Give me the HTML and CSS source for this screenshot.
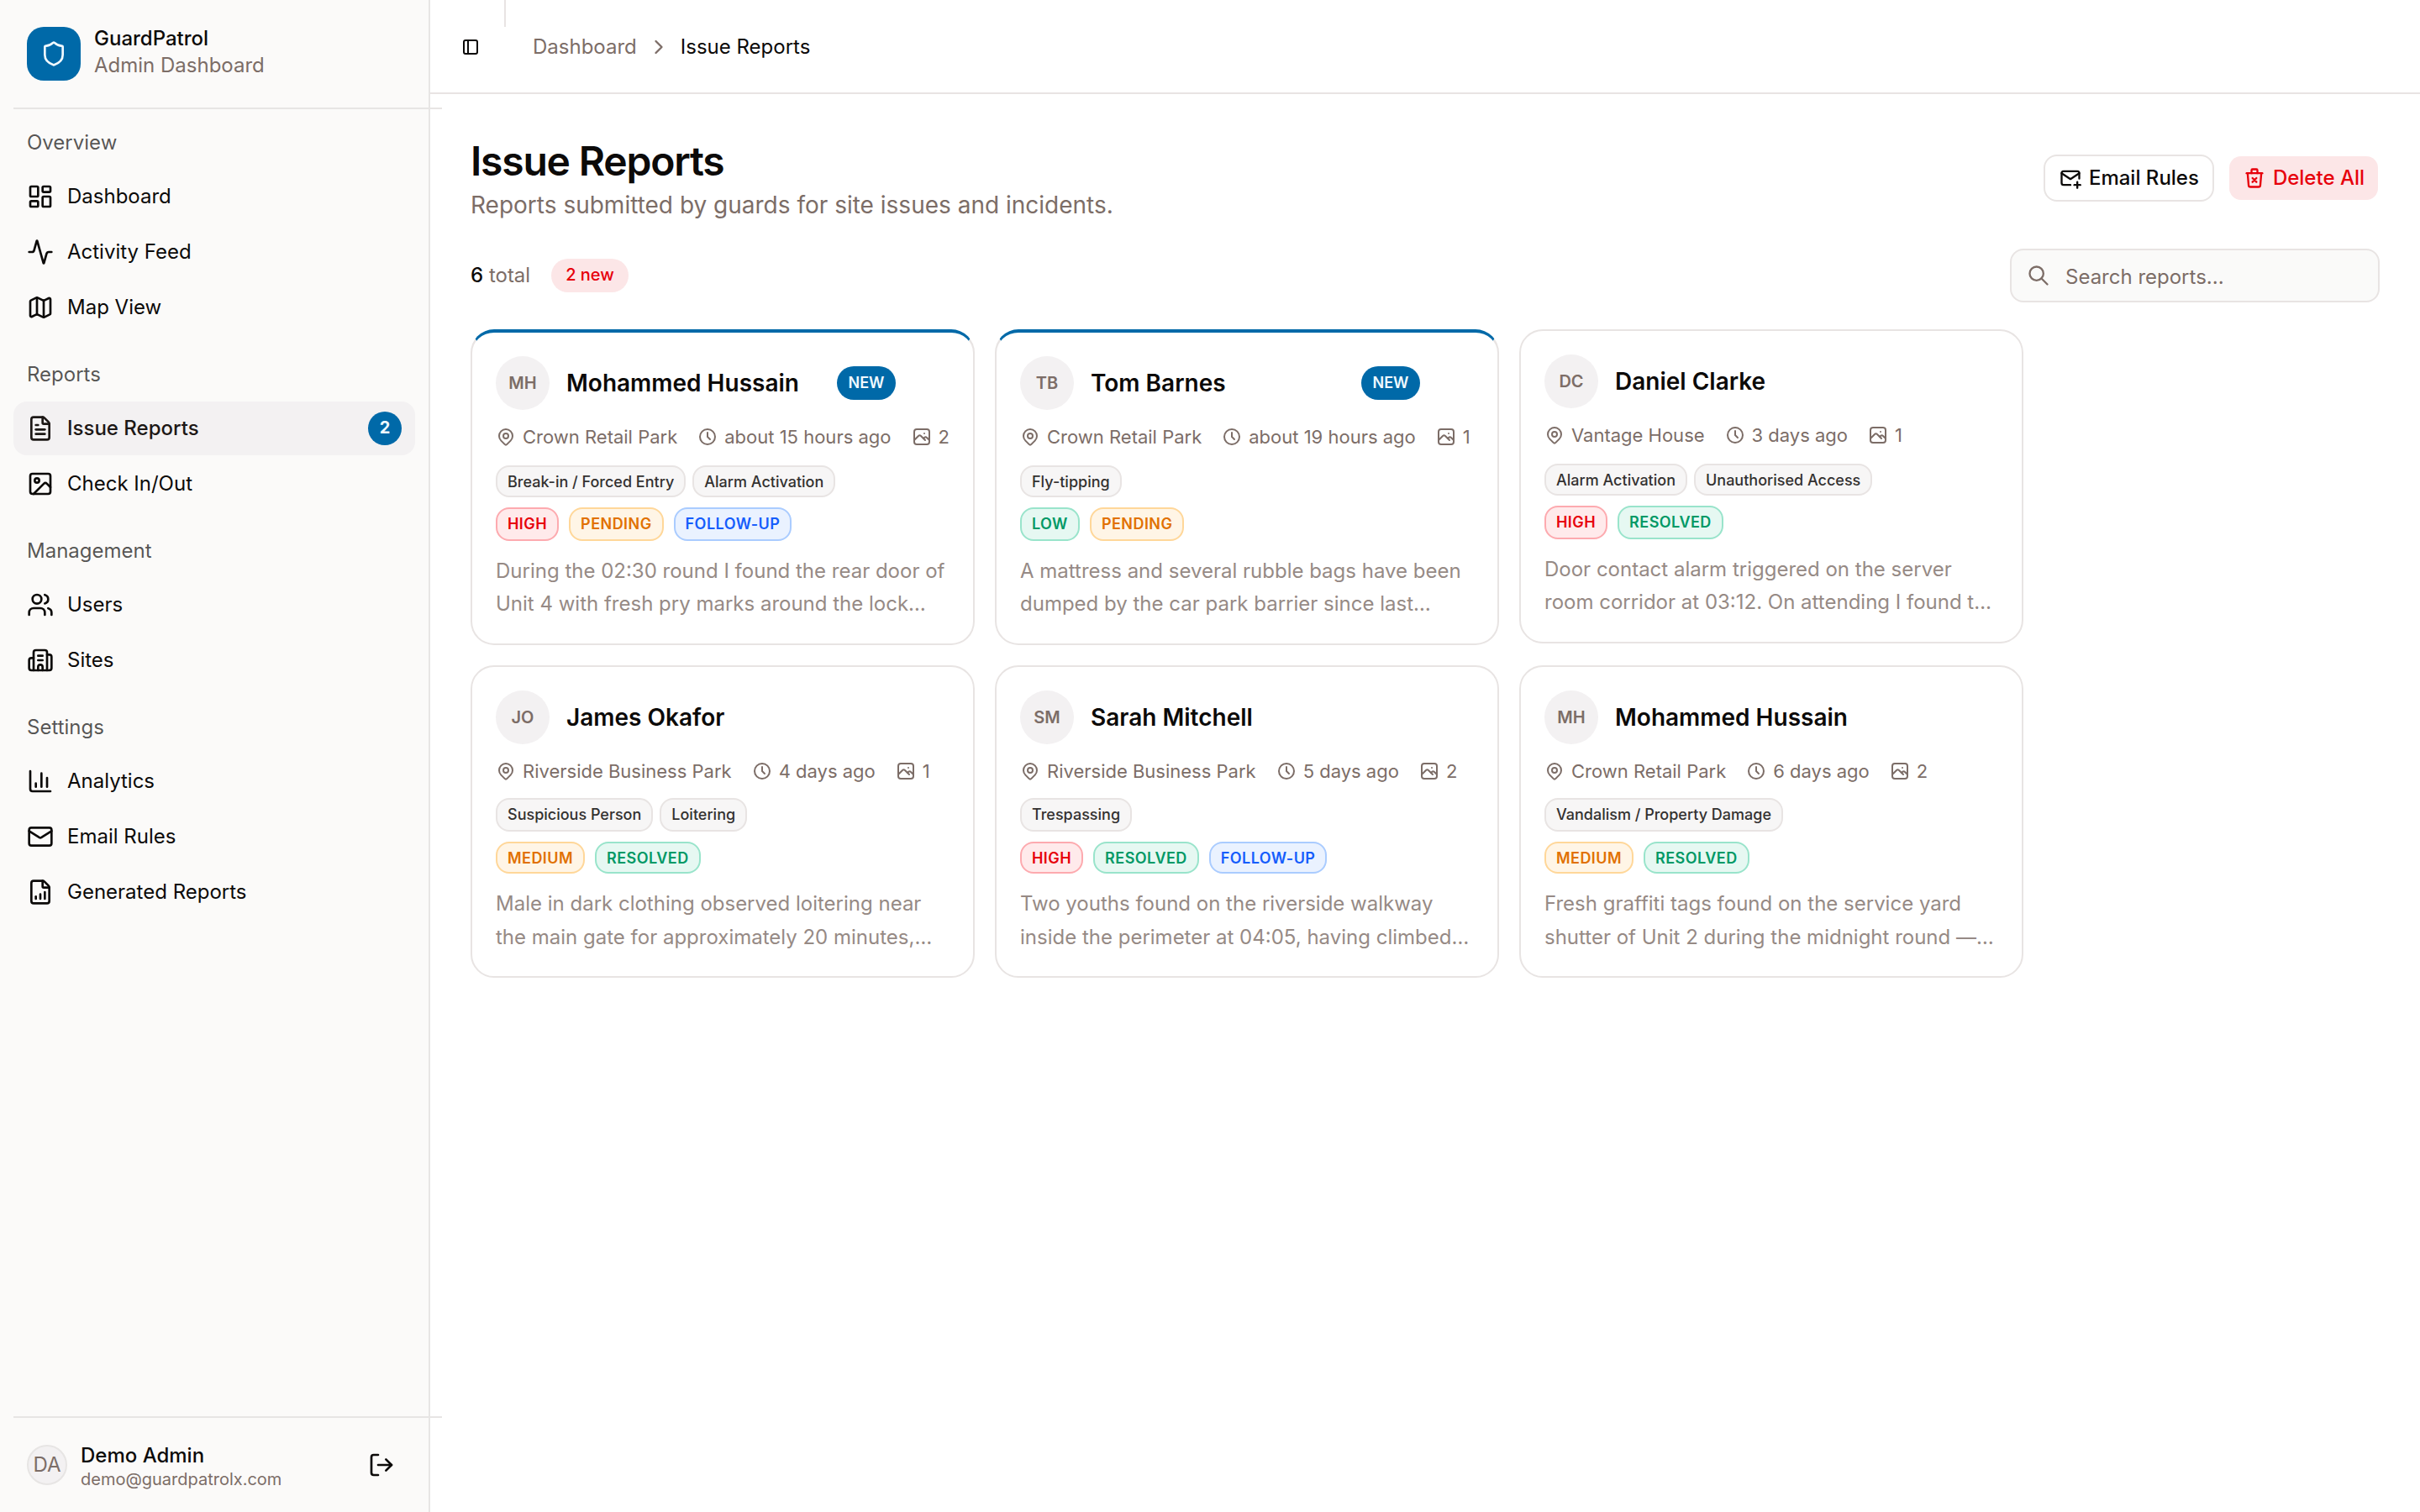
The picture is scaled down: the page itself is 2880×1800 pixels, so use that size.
FILE: index.html
```html
<!DOCTYPE html>
<html lang="en">
<head>
    <meta charset="UTF-8">
    <meta name="viewport" content="width=device-width, initial-scale=1.0">
    <title>GuardPatrol - Issue Reports</title>
    <link rel="stylesheet" href="styles.css">
</head>
<body>

<!-- Icon definitions -->
<svg class="icon-defs" xmlns="http://www.w3.org/2000/svg">
    <symbol id="shield" viewBox="0 0 24 24"><path d="M20 13c0 5-3.5 7.5-7.66 8.95a1 1 0 0 1-.67-.01C7.5 20.5 4 18 4 13V6a1 1 0 0 1 1-1c2 0 4.5-1.2 6.24-2.72a1.17 1.17 0 0 1 1.52 0C14.51 3.81 17 5 19 5a1 1 0 0 1 1 1z"/></symbol>
    <symbol id="dashboard" viewBox="0 0 24 24"><rect width="7" height="9" x="3" y="3" rx="1"/><rect width="7" height="5" x="14" y="3" rx="1"/><rect width="7" height="9" x="14" y="12" rx="1"/><rect width="7" height="5" x="3" y="16" rx="1"/></symbol>
    <symbol id="activity" viewBox="0 0 24 24"><path d="M22 12h-2.48a2 2 0 0 0-1.93 1.46l-2.35 8.36a.25.25 0 0 1-.48 0L9.24 2.18a.25.25 0 0 0-.48 0l-2.35 8.36A2 2 0 0 1 4.49 12H2"/></symbol>
    <symbol id="map" viewBox="0 0 24 24"><path d="M14.106 5.553a2 2 0 0 0 1.788 0l3.659-1.83A1 1 0 0 1 21 4.619v12.764a1 1 0 0 1-.553.894l-4.553 2.277a2 2 0 0 1-1.788 0l-4.212-2.106a2 2 0 0 0-1.788 0l-3.659 1.83A1 1 0 0 1 3 19.381V6.618a1 1 0 0 1 .553-.894l4.553-2.277a2 2 0 0 1 1.788 0z"/><path d="M15 5.764v15"/><path d="M9 3.236v15"/></symbol>
    <symbol id="file-text" viewBox="0 0 24 24"><path d="M6 22a2 2 0 0 1-2-2V4a2 2 0 0 1 2-2h8a2.4 2.4 0 0 1 1.704.706l3.588 3.588A2.4 2.4 0 0 1 20 8v12a2 2 0 0 1-2 2z"/><path d="M14 2v5a1 1 0 0 0 1 1h5"/><path d="M10 9H8"/><path d="M16 13H8"/><path d="M16 17H8"/></symbol>
    <symbol id="image" viewBox="0 0 24 24"><rect width="18" height="18" x="3" y="3" rx="2"/><circle cx="9" cy="9" r="2"/><path d="m21 15-3.086-3.086a2 2 0 0 0-2.828 0L6 21"/></symbol>
    <symbol id="users" viewBox="0 0 24 24"><path d="M16 21v-2a4 4 0 0 0-4-4H6a4 4 0 0 0-4 4v2"/><path d="M16 3.128a4 4 0 0 1 0 7.744"/><path d="M22 21v-2a4 4 0 0 0-3-3.87"/><circle cx="9" cy="7" r="4"/></symbol>
    <symbol id="building" viewBox="0 0 24 24"><path d="M10 12h4"/><path d="M10 8h4"/><path d="M14 21v-3a2 2 0 0 0-4 0v3"/><path d="M6 10H4a2 2 0 0 0-2 2v7a2 2 0 0 0 2 2h16a2 2 0 0 0 2-2V9a2 2 0 0 0-2-2h-2"/><path d="M6 21V5a2 2 0 0 1 2-2h8a2 2 0 0 1 2 2v16"/></symbol>
    <symbol id="chart" viewBox="0 0 24 24"><path d="M3 3v16a2 2 0 0 0 2 2h16"/><path d="M18 17V9"/><path d="M13 17V5"/><path d="M8 17v-3"/></symbol>
    <symbol id="mail" viewBox="0 0 24 24"><path d="m22 7-8.991 5.727a2 2 0 0 1-2.009 0L2 7"/><rect x="2" y="4" width="20" height="16" rx="2"/></symbol>
    <symbol id="file-chart" viewBox="0 0 24 24"><path d="M6 22a2 2 0 0 1-2-2V4a2 2 0 0 1 2-2h8a2.4 2.4 0 0 1 1.704.706l3.588 3.588A2.4 2.4 0 0 1 20 8v12a2 2 0 0 1-2 2z"/><path d="M14 2v5a1 1 0 0 0 1 1h5"/><path d="M8 18v-2"/><path d="M12 18v-4"/><path d="M16 18v-6"/></symbol>
    <symbol id="log-out" viewBox="0 0 24 24"><path d="m16 17 5-5-5-5"/><path d="M21 12H9"/><path d="M9 21H5a2 2 0 0 1-2-2V5a2 2 0 0 1 2-2h4"/></symbol>
    <symbol id="sidebar-toggle" viewBox="0 0 24 24"><path d="M4 6a2 2 0 0 1 2-2h12a2 2 0 0 1 2 2v12a2 2 0 0 1-2 2H6a2 2 0 0 1-2-2z"/><path d="M9 4v16"/></symbol>
    <symbol id="chevron" viewBox="0 0 24 24"><path d="M9 6l6 6l-6 6"/></symbol>
    <symbol id="mail-plus" viewBox="0 0 24 24"><path d="M12 19H5a2 2 0 0 1-2-2V7a2 2 0 0 1 2-2h14a2 2 0 0 1 2 2v5.5"/><path d="M16 19h6"/><path d="M19 16v6"/><path d="M3 7l9 6l9-6"/></symbol>
    <symbol id="trash-x" viewBox="0 0 24 24"><path d="M4 7h16"/><path d="M5 7l1 12a2 2 0 0 0 2 2h8a2 2 0 0 0 2-2l1-12"/><path d="M9 7V4a1 1 0 0 1 1-1h4a1 1 0 0 1 1 1v3"/><path d="M10 12l4 4m0-4l-4 4"/></symbol>
    <symbol id="search" viewBox="0 0 24 24"><circle cx="10" cy="10" r="7"/><path d="M21 21l-6-6"/></symbol>
    <symbol id="pin" viewBox="0 0 24 24"><circle cx="12" cy="11" r="3"/><path d="M17.657 16.657L13.414 20.9a2 2 0 0 1-2.827 0l-4.244-4.243a8 8 0 1 1 11.314 0z"/></symbol>
    <symbol id="clock" viewBox="0 0 24 24"><circle cx="12" cy="12" r="9"/><path d="M12 7v5l3 3"/></symbol>
    <symbol id="photo" viewBox="0 0 24 24"><path d="M15 8h.01"/><path d="M3 6a3 3 0 0 1 3-3h12a3 3 0 0 1 3 3v12a3 3 0 0 1-3 3H6a3 3 0 0 1-3-3z"/><path d="M3 16l5-5c.928-.893 2.072-.893 3 0l5 5"/><path d="M14 14l1-1c.928-.893 2.072-.893 3 0l3 3"/></symbol>
</svg>

<div class="app">
    <aside class="sidebar">
        <div class="brand">
            <div class="brand-logo"><svg class="icon"><use href="#shield"/></svg></div>
            <div class="brand-text">
                <span class="brand-name">GuardPatrol</span>
                <span class="brand-sub">Admin Dashboard</span>
            </div>
        </div>
        <div class="divider"></div>

        <nav class="nav">
            <div class="nav-group">
                <div class="nav-label">Overview</div>
                <a class="nav-item"><svg class="icon"><use href="#dashboard"/></svg><span>Dashboard</span></a>
                <a class="nav-item"><svg class="icon"><use href="#activity"/></svg><span>Activity Feed</span></a>
                <a class="nav-item"><svg class="icon"><use href="#map"/></svg><span>Map View</span></a>
            </div>
            <div class="nav-group">
                <div class="nav-label">Reports</div>
                <a class="nav-item active"><svg class="icon"><use href="#file-text"/></svg><span>Issue Reports</span><span class="nav-badge">2</span></a>
                <a class="nav-item"><svg class="icon"><use href="#image"/></svg><span>Check In/Out</span></a>
            </div>
            <div class="nav-group">
                <div class="nav-label">Management</div>
                <a class="nav-item"><svg class="icon"><use href="#users"/></svg><span>Users</span></a>
                <a class="nav-item"><svg class="icon"><use href="#building"/></svg><span>Sites</span></a>
            </div>
            <div class="nav-group">
                <div class="nav-label">Settings</div>
                <a class="nav-item"><svg class="icon"><use href="#chart"/></svg><span>Analytics</span></a>
                <a class="nav-item"><svg class="icon"><use href="#mail"/></svg><span>Email Rules</span></a>
                <a class="nav-item"><svg class="icon"><use href="#file-chart"/></svg><span>Generated Reports</span></a>
            </div>
        </nav>

        <div class="divider"></div>
        <div class="account">
            <div class="account-avatar">DA</div>
            <div class="account-text">
                <span class="account-name">Demo Admin</span>
                <span class="account-email">demo@guardpatrolx.com</span>
            </div>
            <svg class="icon"><use href="#log-out"/></svg>
        </div>
    </aside>

    <main class="main">
        <header class="topbar">
            <svg class="icon toggle"><use href="#sidebar-toggle"/></svg>
            <div class="topbar-separator"></div>
            <div class="breadcrumb">
                <span class="crumb">Dashboard</span>
                <svg class="icon"><use href="#chevron"/></svg>
                <span class="crumb current">Issue Reports</span>
            </div>
        </header>

        <section class="content">
            <div class="page-head">
                <div class="page-title">
                    <h1>Issue Reports</h1>
                    <p class="subtitle">Reports submitted by guards for site issues and incidents.</p>
                </div>
                <div class="actions">
                    <button class="btn btn-outline"><svg class="icon"><use href="#mail-plus"/></svg>Email Rules</button>
                    <button class="btn btn-danger"><svg class="icon"><use href="#trash-x"/></svg>Delete All</button>
                </div>
            </div>

            <div class="filters">
                <div class="total"><b>6</b> total</div>
                <span class="new-count">2 new</span>
                <div class="search"><svg class="icon"><use href="#search"/></svg><input type="text" placeholder="Search reports..."></div>
            </div>

            <div class="cards">
                <article class="card unread">
                    <div class="card-head">
                        <div class="avatar">MH</div>
                        <h2>Mohammed Hussain</h2>
                        <span class="new-badge">NEW</span>
                    </div>
                    <div class="meta">
                        <span><svg class="icon"><use href="#pin"/></svg>Crown Retail Park</span>
                        <span><svg class="icon"><use href="#clock"/></svg>about 15 hours ago</span>
                        <span><svg class="icon"><use href="#photo"/></svg>2</span>
                    </div>
                    <div class="tags"><span class="tag">Break-in / Forced Entry</span><span class="tag">Alarm Activation</span></div>
                    <div class="pills"><span class="pill red">HIGH</span><span class="pill amber">PENDING</span><span class="pill blue">FOLLOW-UP</span></div>
                    <p class="desc">During the 02:30 round I found the rear door of Unit 4 with fresh pry marks around the lock…</p>
                </article>

                <article class="card unread">
                    <div class="card-head">
                        <div class="avatar">TB</div>
                        <h2>Tom Barnes</h2>
                        <span class="new-badge">NEW</span>
                    </div>
                    <div class="meta">
                        <span><svg class="icon"><use href="#pin"/></svg>Crown Retail Park</span>
                        <span><svg class="icon"><use href="#clock"/></svg>about 19 hours ago</span>
                        <span><svg class="icon"><use href="#photo"/></svg>1</span>
                    </div>
                    <div class="tags"><span class="tag">Fly-tipping</span></div>
                    <div class="pills"><span class="pill green">LOW</span><span class="pill amber">PENDING</span></div>
                    <p class="desc">A mattress and several rubble bags have been dumped by the car park barrier since last…</p>
                </article>

                <article class="card">
                    <div class="card-head">
                        <div class="avatar">DC</div>
                        <h2>Daniel Clarke</h2>
                    </div>
                    <div class="meta">
                        <span><svg class="icon"><use href="#pin"/></svg>Vantage House</span>
                        <span><svg class="icon"><use href="#clock"/></svg>3 days ago</span>
                        <span><svg class="icon"><use href="#photo"/></svg>1</span>
                    </div>
                    <div class="tags"><span class="tag">Alarm Activation</span><span class="tag">Unauthorised Access</span></div>
                    <div class="pills"><span class="pill red">HIGH</span><span class="pill green">RESOLVED</span></div>
                    <p class="desc">Door contact alarm triggered on the server room corridor at 03:12. On attending I found t…</p>
                </article>

                <article class="card">
                    <div class="card-head">
                        <div class="avatar">JO</div>
                        <h2>James Okafor</h2>
                    </div>
                    <div class="meta">
                        <span><svg class="icon"><use href="#pin"/></svg>Riverside Business Park</span>
                        <span><svg class="icon"><use href="#clock"/></svg>4 days ago</span>
                        <span><svg class="icon"><use href="#photo"/></svg>1</span>
                    </div>
                    <div class="tags"><span class="tag">Suspicious Person</span><span class="tag">Loitering</span></div>
                    <div class="pills"><span class="pill amber">MEDIUM</span><span class="pill green">RESOLVED</span></div>
                    <p class="desc">Male in dark clothing observed loitering near the main gate for approximately 20 minutes,…</p>
                </article>

                <article class="card">
                    <div class="card-head">
                        <div class="avatar">SM</div>
                        <h2>Sarah Mitchell</h2>
                    </div>
                    <div class="meta">
                        <span><svg class="icon"><use href="#pin"/></svg>Riverside Business Park</span>
                        <span><svg class="icon"><use href="#clock"/></svg>5 days ago</span>
                        <span><svg class="icon"><use href="#photo"/></svg>2</span>
                    </div>
                    <div class="tags"><span class="tag">Trespassing</span></div>
                    <div class="pills"><span class="pill red">HIGH</span><span class="pill green">RESOLVED</span><span class="pill blue">FOLLOW-UP</span></div>
                    <p class="desc">Two youths found on the riverside walkway inside the perimeter at 04:05, having climbed…</p>
                </article>

                <article class="card">
                    <div class="card-head">
                        <div class="avatar">MH</div>
                        <h2>Mohammed Hussain</h2>
                    </div>
                    <div class="meta">
                        <span><svg class="icon"><use href="#pin"/></svg>Crown Retail Park</span>
                        <span><svg class="icon"><use href="#clock"/></svg>6 days ago</span>
                        <span><svg class="icon"><use href="#photo"/></svg>2</span>
                    </div>
                    <div class="tags"><span class="tag">Vandalism / Property Damage</span></div>
                    <div class="pills"><span class="pill amber">MEDIUM</span><span class="pill green">RESOLVED</span></div>
                    <p class="desc">Fresh graffiti tags found on the service yard shutter of Unit 2 during the midnight round —…</p>
                </article>
            </div>
        </section>
    </main>
</div>

</body>
</html>
```
FILE: styles.css
```css
:root {
    --foreground: #0c0a09;
    --muted: #7c6d67;
    --muted-bg: #f3f1f2;
    --border: #e8e4e3;
    --sidebar: #fbfaf9;
    --primary: #0069a8;
    --primary-text: #f0f9ff;
    --danger: #e7000b;
}
* {
    box-sizing: border-box;
}
body {
    margin: 0;
    font-family: Inter, sans-serif;
    font-size: 24px;
    line-height: 32px;
    color: var(--foreground);
    background-color: white;
}
h1, h2, p {
    margin: 0;
}
.icon-defs {
    display: none;
}
.icon {
    width: 32px;
    height: 32px;
    flex-shrink: 0;
    fill: none;
    stroke: currentColor;
    stroke-width: 2;
    stroke-linecap: round;
    stroke-linejoin: round;
}
.app {
    display: flex;
    height: 1800px;
}

/* Sidebar */
.sidebar {
    width: 512px;
    flex-shrink: 0;
    display: flex;
    flex-direction: column;
    background-color: var(--sidebar);
    border-right: 2px solid #e7e5e4;
}
.brand {
    height: 128px;
    display: flex;
    align-items: center;
    gap: 16px;
    padding: 0 32px;
}
.brand-logo {
    width: 64px;
    height: 64px;
    display: flex;
    align-items: center;
    justify-content: center;
    border-radius: 20px;
    background-color: var(--primary);
    color: var(--primary-text);
}
.brand-text {
    display: flex;
    flex-direction: column;
    margin-top: -4px;
}
.brand-name {
    font-weight: 500;
}
.brand-sub {
    color: var(--muted);
}
/* Lines run past the right edge of the sidebar */
.divider {
    width: 510px;
    height: 2px;
    flex-shrink: 0;
    margin-left: 16px;
    background-color: #e7e5e4;
}
.nav {
    flex: 1;
}
.nav-group {
    display: flex;
    flex-direction: column;
    gap: 2px;
    padding: 8px 16px;
}
.nav-label {
    height: 64px;
    padding: 16px;
    margin-bottom: -2px;
    color: rgba(12, 10, 9, 0.7);
}
.nav-item {
    height: 64px;
    display: flex;
    align-items: center;
    gap: 16px;
    padding: 0 16px;
    border-radius: 16px;
}
.nav-item.active {
    background-color: var(--muted-bg);
    color: #1d1816;
    font-weight: 500;
}
.nav-badge {
    width: 40px;
    height: 40px;
    line-height: 39px;
    margin-left: auto;
    border-radius: 50%;
    background-color: var(--primary);
    color: var(--primary-text);
    font-size: 20px;
    font-weight: 700;
    text-align: center;
}
.account {
    height: 112px;
    display: flex;
    align-items: center;
    gap: 16px;
    padding: 0 40px 0 32px;
}
.account-avatar {
    width: 48px;
    height: 48px;
    display: flex;
    align-items: center;
    justify-content: center;
    border: 2px solid #e7e5e4;
    border-radius: 50%;
    background-color: var(--muted-bg);
    color: var(--muted);
}
.account-text {
    flex: 1;
    display: flex;
    flex-direction: column;
    padding-top: 3px;
}
.account-name {
    line-height: 30px;
    font-weight: 500;
}
.account-email {
    font-size: 20px;
    line-height: 26px;
    color: var(--muted);
}

/* Top bar */
.main {
    flex: 1;
}
.topbar {
    height: 112px;
    display: flex;
    align-items: center;
    padding: 2px 0 0 36px;
    border-bottom: 2px solid var(--border);
}
.topbar .toggle {
    width: 24px;
    height: 24px;
}
.topbar-separator {
    width: 2px;
    height: 32px;
    align-self: flex-start;
    margin: -2px 32px 0 28px;
    background-color: var(--border);
}
.breadcrumb {
    display: flex;
    align-items: center;
    gap: 12px;
}
.breadcrumb .icon {
    width: 28px;
    height: 28px;
    color: var(--muted);
}
.crumb {
    color: var(--muted);
}
.crumb.current {
    color: var(--foreground);
}

/* Page content */
.content {
    padding: 48px;
}
.page-head {
    display: flex;
    align-items: center;
    justify-content: space-between;
    height: 104px;
}
.page-title {
    padding-top: 3px;
}
h1 {
    font-size: 48px;
    line-height: 61px;
    font-weight: 600;
    letter-spacing: -0.025em;
}
.subtitle {
    font-size: 28px;
    line-height: 44px;
    color: var(--muted);
}
.actions {
    display: flex;
    gap: 16px;
}
.btn {
    height: 56px;
    display: flex;
    align-items: center;
    gap: 8px;
    padding: 0 16px 1px;
    border: 2px solid var(--border);
    border-radius: 16px;
    background-color: white;
    color: var(--foreground);
    font-family: inherit;
    font-size: 24px;
    font-weight: 500;
}
.btn .icon {
    width: 28px;
    height: 28px;
}
.btn-danger {
    border-color: transparent;
    background-color: #fce6e7;
    background-clip: padding-box;
    color: var(--danger);
}
.filters {
    display: flex;
    align-items: center;
    margin-top: 32px;
    height: 64px;
}
.total {
    color: var(--muted);
}
.total b {
    font-weight: 500;
    color: var(--foreground);
}
.new-count {
    height: 40px;
    line-height: 39px;
    margin-left: 25px;
    padding: 0 17px;
    border-radius: 20px;
    background-color: #fce6e7;
    color: var(--danger);
    font-size: 20px;
    font-weight: 500;
}
.search {
    width: 440px;
    height: 64px;
    display: flex;
    align-items: center;
    gap: 18px;
    margin-left: auto;
    padding: 0 18px;
    border: 2px solid var(--border);
    border-radius: 16px;
    background-color: #fafaf9;
    color: var(--muted);
}
.search .icon {
    width: 28px;
    height: 28px;
}
.search input {
    flex: 1;
    min-width: 0;
    padding: 2px 0 0;
    border: none;
    outline: none;
    background: none;
    font-family: inherit;
    font-size: 24px;
}
.search input::placeholder {
    color: var(--muted);
}

/* Report cards */
.cards {
    display: grid;
    grid-template-columns: repeat(3, 600px);
    align-items: start;
    gap: 24px;
    margin-top: 32px;
}
.card {
    padding: 28px;
    border: 2px solid var(--border);
    border-radius: 28px;
    background-color: white;
}
.card.unread {
    border-top: 4px solid var(--primary);
}
.card-head {
    display: flex;
    align-items: center;
    gap: 20px;
}
.avatar {
    width: 64px;
    height: 64px;
    line-height: 64px;
    border-radius: 50%;
    background-color: var(--muted-bg);
    color: var(--muted);
    font-size: 20px;
    font-weight: 600;
    text-align: center;
}
.card h2 {
    font-size: 28px;
    line-height: 40px;
    font-weight: 600;
}
.new-badge {
    width: 70px;
    height: 40px;
    line-height: 40px;
    margin-left: auto;
    margin-right: 64px;
    border-radius: 20px;
    background-color: var(--primary);
    color: var(--primary-text);
    font-size: 18px;
    font-weight: 600;
    text-align: center;
}
.meta {
    display: flex;
    gap: 24px;
    height: 36px;
    margin-top: 14px;
    font-size: 22px;
    color: var(--muted);
}
.meta span {
    display: flex;
    align-items: center;
    gap: 8px;
    white-space: nowrap;
}
.meta .icon {
    width: 24px;
    height: 24px;
}
.tags {
    display: flex;
    gap: 8px;
    margin-top: 16px;
}
.tag {
    height: 38px;
    line-height: 35px;
    padding: 0 12px;
    border: 2px solid var(--border);
    border-radius: 16px;
    background-color: #f7f6f6;
    color: #333130;
    font-size: 18px;
    font-weight: 500;
}
.pills {
    display: flex;
    gap: 12px;
    margin-top: 12px;
}
.pill {
    height: 40px;
    line-height: 35px;
    padding: 0 12px;
    border: 2px solid;
    border-radius: 16px;
    font-size: 18px;
    font-weight: 600;
    letter-spacing: 0.025em;
}
.red {
    border-color: #fdaaaf;
    background-color: #ffeaeb;
    color: #e7000b;
}
.amber {
    border-color: #ffd799;
    background-color: #fff5e6;
    color: #e17100;
}
.green {
    border-color: #99e4cb;
    background-color: #e6f8f2;
    color: #009966;
}
.blue {
    border-color: #aaccff;
    background-color: #eaf2ff;
    color: #155dfc;
}
.desc {
    margin-top: 16px;
    line-height: 39px;
    color: #968a85;
}
/* Second row sits slightly tighter */
.card:nth-child(n+4) {
    padding-bottom: 26px;
}
.card:nth-child(n+4) .tags {
    margin-top: 14px;
}
.card:nth-child(n+4) .tag {
    height: 40px;
    line-height: 36px;
}
.card:nth-child(n+4) .pill {
    height: 38px;
}
.card:nth-child(n+4) .desc {
    line-height: 40px;
}
```
